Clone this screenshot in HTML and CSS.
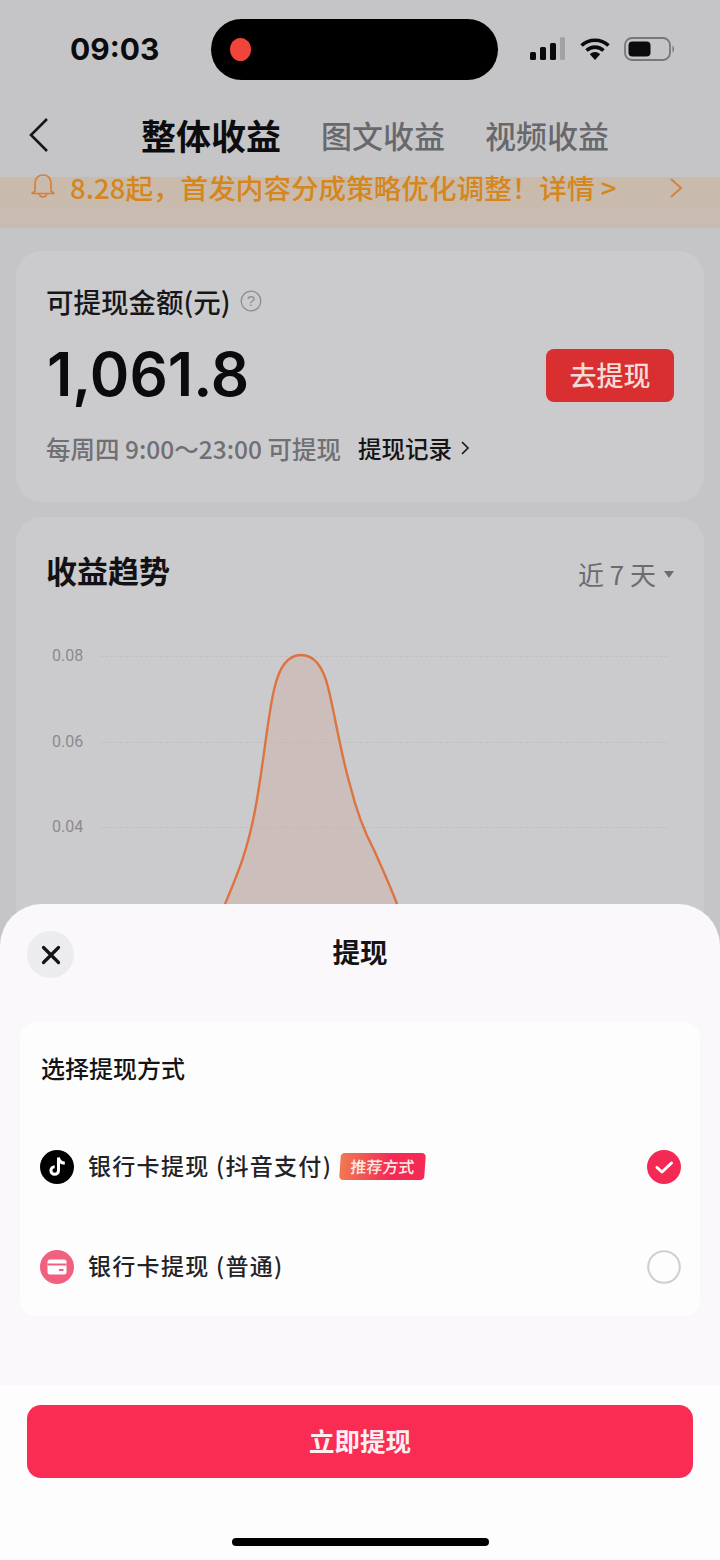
FILE: index.html
```html
<!DOCTYPE html>
<html lang="zh">
<head>
<meta charset="utf-8">
<title>整体收益</title>
<link rel="stylesheet" href="styles.css">
</head>
<body>
<div class="page">
  <div class="status">
    <span class="time">09:03</span>
    <div class="island"><span class="rec"></span></div>
    <div class="status-icons">
      <svg class="signal" width="36" height="24" viewBox="0 0 36 24"><rect x="0" y="15" width="6" height="8" rx="1.5" fill="#0a0a0c"/><rect x="10" y="10" width="6" height="13" rx="1.5" fill="#0a0a0c"/><rect x="20" y="6" width="6" height="17" rx="1.5" fill="#0a0a0c"/><rect x="30" y="0" width="5" height="23" rx="1.5" fill="#a2a2a6"/></svg>
      <svg class="wifi" width="32" height="24" viewBox="0 0 32 24"><path d="M2.500 8.500C10 1.500 22 1.500 29.500 8.500M7.500 13.500C12.500 9 19.500 9 24.500 13.500" fill="none" stroke="#0a0a0c" stroke-width="3.600"/><path d="M10.800 17.200C14 14.300 18 14.300 21.200 17.200L16 23Z" fill="#0a0a0c"/></svg>
      <svg class="battery" width="52" height="26" viewBox="0 0 52 26"><rect x="1" y="2" width="45" height="22" rx="7" fill="none" stroke="#77777b" stroke-width="1.800"/><rect x="4.500" y="5.500" width="22" height="15" rx="4" fill="#0a0a0c"/><path d="M48.500 9.500C50.500 10.500 50.500 15.500 48.500 16.500Z" fill="#77777b"/></svg>
    </div>
  </div>

  <div class="nav">
    <svg class="back" width="24" height="36" viewBox="0 0 24 36"><path d="M20 2L4 18L20 34" fill="none" stroke="#17171a" stroke-width="2.600"/></svg>
    <span class="tab tab-on">整体收益</span>
    <span class="tab">图文收益</span>
    <span class="tab">视频收益</span>
  </div>

  <div class="notice">
    <svg class="bell" width="24" height="26" viewBox="0 0 24 26"><path d="M4 18V10C4 5 7.500 2 12 2S20 5 20 10V18L23 20.500H1Z M8.500 20.500C8.500 25 15.500 25 15.500 20.500" fill="none" stroke="#d6803a" stroke-width="1.700" stroke-linejoin="round"/></svg>
    <span class="notice-text">8.28起，首发内容分成策略优化调整！详情 &gt;</span>
    <svg class="notice-arrow" width="14" height="22" viewBox="0 0 14 22"><path d="M2 2L12 11L2 20" fill="none" stroke="#d6803a" stroke-width="2"/></svg>
  </div>

  <section class="card balance">
    <div class="balance-title">
      <span>可提现金额(元)</span>
      <svg width="22" height="22" viewBox="0 0 22 22"><circle cx="11" cy="11" r="9.800" fill="none" stroke="#8d8d90" stroke-width="1.300"/><text x="11" y="16" text-anchor="middle" class="help-mark">?</text></svg>
    </div>
    <div class="balance-row">
      <span class="amount">1,061.8</span>
      <span class="go-btn">去提现</span>
    </div>
    <div class="balance-note">
      <span class="note-grey">每周四 9:00～23:00 可提现</span>
      <span class="note-link">提现记录</span>
      <svg width="10" height="16" viewBox="0 0 10 16"><path d="M2 2L8 8L2 14" fill="none" stroke="#17171a" stroke-width="1.600"/></svg>
    </div>
  </section>

  <section class="card trend">
    <div class="trend-head">
      <span class="trend-title">收益趋势</span>
      <span class="range">近 7 天<i class="caret"></i></span>
    </div>
    <div class="chart">
      <div class="chart-row"><span>0.08</span><i></i></div>
      <div class="chart-row"><span>0.06</span><i></i></div>
      <div class="chart-row"><span>0.04</span><i></i></div>
      <svg class="curve" width="688" height="300" viewBox="0 0 688 300">
        <path d="M209 259C222 228 232 205 240 160C248 115 252 70 258 45C263 22 272 10 285 10C298 10 307 22 312 42C319 70 324 105 334 140C341 168 350 190 358 205C367 225 375 243 381 259Z" fill="#d0a78c" fill-opacity=".28"/>
        <path d="M209 259C222 228 232 205 240 160C248 115 252 70 258 45C263 22 272 10 285 10C298 10 307 22 312 42C319 70 324 105 334 140C341 168 350 190 358 205C367 225 375 243 381 259" fill="none" stroke="#dd7440" stroke-width="2.400"/>
      </svg>
    </div>
  </section>

  <div class="sheet">
    <div class="sheet-head">
      <span class="close">
        <svg width="20" height="20" viewBox="0 0 20 20"><path d="M2.500 2.500L17.500 17.500M17.500 2.500L2.500 17.500" stroke="#141416" stroke-width="3.200" stroke-linecap="round"/></svg>
      </span>
      <span class="sheet-title">提现</span>
    </div>
    <div class="methods">
      <div class="methods-title">选择提现方式</div>
      <div class="method first">
        <svg class="method-icon" width="34" height="34" viewBox="0 0 34 34"><circle cx="17" cy="17" r="17" fill="#000"/><path d="M18.500 7.500V20.500A3.800 3.800 0 1 1 14.700 16.700M18.500 7.500C18.800 10.800 21.300 13 24.800 13.200" fill="none" stroke="#fff" stroke-width="3"/></svg>
        <span class="method-name">银行卡提现 (抖音支付)</span>
        <span class="tag">推荐方式</span>
        <svg class="radio" width="34" height="34" viewBox="0 0 34 34"><circle cx="17" cy="17" r="17" fill="#f42a55"/><path d="M10 17.500L15 22L24.500 13" fill="none" stroke="#fff" stroke-width="3" stroke-linecap="round" stroke-linejoin="round"/></svg>
      </div>
      <div class="method">
        <svg class="method-icon" width="34" height="34" viewBox="0 0 34 34"><circle cx="17" cy="17" r="17" fill="#f2607f"/><rect x="7.500" y="9.500" width="19" height="15" rx="2.500" fill="#fff"/><rect x="7.500" y="13.500" width="19" height="2" fill="#f2607f"/><rect x="19" y="19" width="4.500" height="2" fill="#f2607f"/></svg>
        <span class="method-name">银行卡提现 (普通)</span>
        <svg class="radio" width="34" height="34" viewBox="0 0 34 34"><circle cx="17" cy="17" r="15.800" fill="none" stroke="#cfcfd1" stroke-width="2"/></svg>
      </div>
    </div>
    <div class="sheet-foot">
      <div class="cta">立即提现</div>
      <div class="home-bar"></div>
    </div>
  </div>
</div>
</body>
</html>
```
FILE: styles.css
```css
* { box-sizing: border-box; }
html, body { margin: 0; padding: 0; }
body {
  width: 720px;
  height: 1560px;
  overflow: hidden;
  font-family: "Noto Sans CJK SC", "Noto Sans", sans-serif;
}
.page {
  position: relative;
  width: 720px;
  height: 1560px;
  overflow: hidden;
  background: #c5c5c8;
  color: #121214;
}

/* status bar */
.status {
  height: 100px;
  padding-top: 19px;
  display: flex;
  align-items: flex-start;
}
.time {
  width: 211px;
  padding-left: 70px;
  height: 61px;
  font: 700 30px/60px Inter, "Liberation Sans", sans-serif;
  color: #0c0c0e;
}
.island {
  width: 287px;
  height: 61px;
  border-radius: 31px;
  background: #000;
  display: flex;
  align-items: center;
  padding-left: 19px;
}
.rec {
  width: 21px;
  height: 23px;
  border-radius: 50%;
  background: #f1453c;
}
.status-icons {
  flex: 1;
  height: 60px;
  padding-left: 32px;
  display: flex;
  align-items: center;
  gap: 14px;
}
.wifi { margin-left: -1px; }
.battery { margin-left: -1px; }

/* nav */
.nav {
  height: 77px;
  display: flex;
  align-items: center;
  padding: 0 0 2px 27px;
}
.back { margin-top: -6px; margin-right: 90px; }
.tab {
  font-size: 31px;
  font-weight: 500;
  line-height: 44px;
  margin-top: -6px;
  color: #68686c;
  margin-right: 40px;
}
.tab-on {
  font-size: 35px;
  font-weight: 700;
  color: #0d0d0f;
}

/* notice */
.notice {
  height: 51px;
  background: linear-gradient(#c9baaa, #c8bcb2);
  display: flex;
  align-items: flex-start;
  padding: 0 37px 0 31px;
}
.bell { margin-top: -4px; margin-right: 15px; }
.notice-text {
  flex: 1;
  margin-top: -8px;
  font-size: 27.600px;
  font-weight: 500;
  line-height: 36px;
  white-space: nowrap;
  color: #d5861c;
}

/* cards */
.card {
  margin: 0 16px;
  background: #cbcacd;
  border-radius: 26px;
}
.balance {
  margin-top: 23px;
  height: 251px;
  padding: 30px 30px 0 30px;
}
.balance-title {
  display: flex;
  align-items: center;
  gap: 9px;
  height: 40px;
  font-size: 27.500px;
  font-weight: 500;
  color: #17171a;
}
.help-mark {
  font: 400 15px "Liberation Sans", sans-serif;
  fill: #8d8d90;
}
.balance-row {
  margin-top: 17px;
  height: 72px;
  display: flex;
  align-items: center;
  justify-content: space-between;
}
.amount {
  font: 600 60px/72px Inter, "Liberation Sans", sans-serif;
  padding-left: 1px;
  color: #0b0b0d;
}
.go-btn {
  width: 128px;
  height: 53px;
  margin-top: 2px;
  border-radius: 8px;
  background: #d92f30;
  color: #f1dcd8;
  font-size: 27px;
  font-weight: 500;
  line-height: 51px;
  text-align: center;
}
.balance-note {
  margin-top: 21px;
  display: flex;
  align-items: center;
  height: 34px;
  font-size: 23.500px;
  font-weight: 500;
  white-space: nowrap;
}
.note-grey { font-size: 24.500px; color: #707074; margin-right: 17px; }
.note-link { color: #141416; margin-right: 8px; }
.trend {
  margin-top: 15px;
  height: 640px;
  padding-top: 30px;
}
.trend-head {
  display: flex;
  align-items: center;
  justify-content: space-between;
  padding: 0 30px;
  height: 44px;
}
.trend-title {
  font-size: 31px;
  font-weight: 700;
  color: #121214;
}
.range {
  display: flex;
  align-items: center;
  font-size: 26px;
  color: #6c6c70;
  margin-top: 8px;
}
.caret {
  margin-left: 8px;
  margin-top: 2px;
  border: 5px solid transparent;
  border-top: 7px solid #6c6c70;
  border-bottom: 0;
}
.chart {
  position: relative;
  margin-top: 54px;
}
.chart-row {
  height: 85.500px;
  display: flex;
  align-items: flex-start;
  padding-left: 36px;
  font: 400 16px/22px Roboto, "Liberation Sans", sans-serif;
  color: #8b8b8f;
}
.chart-row span { width: 48px; }
.chart-row i {
  width: 568px;
  margin-top: 11px;
  border-top: 1px dashed #c0c0c3;
}
.curve {
  position: absolute;
  left: 0;
  top: 0;
}

/* sheet */
.sheet {
  position: absolute;
  left: 0;
  right: 0;
  top: 904px;
  bottom: 0;
  background: #faf8fa;
  border-radius: 42px 42px 0 0;
  display: flex;
  flex-direction: column;
}
.sheet-head {
  position: relative;
  height: 118px;
  display: flex;
  justify-content: center;
  padding-top: 25px;
}
.close {
  position: absolute;
  left: 27px;
  top: 27px;
  width: 47px;
  height: 47px;
  border-radius: 50%;
  background: #ecebee;
  display: flex;
  align-items: center;
  justify-content: center;
}
.sheet-title {
  font-size: 27.500px;
  font-weight: 700;
  line-height: 44px;
  color: #141416;
}
.methods {
  margin: 0 20px;
  height: 294px;
  background: #fefdfe;
  border-radius: 16px;
  padding: 26px 20px 0 21px;
}
.methods-title {
  font-size: 24px;
  font-weight: 500;
  line-height: 40px;
  color: #141416;
}
.method {
  height: 100px;
  margin-right: -1px;
  margin-left: -1px;
  display: flex;
  align-items: center;
}
.method.first { margin-top: 29px; }
.method-icon { flex: none; margin-right: 14px; }
.method-name {
  font-size: 23px;
  font-weight: 500;
  line-height: 30px;
  margin-top: -4px;
  letter-spacing: 1.300px;
  color: #232326;
  white-space: nowrap;
}
.tag {
  margin-left: 8px;
  margin-top: -1px;
  width: 85px;
  height: 27px;
  border-radius: 4px;
  background: linear-gradient(90deg, #f07a50, #f42a55 60%);
  color: #fbeae6;
  font-size: 16px;
  font-weight: 500;
  line-height: 26px;
  text-align: center;
  transform: skewX(-4deg);
}
.radio { margin-left: auto; }
.sheet-foot {
  margin-top: auto;
  height: 175px;
  background: #fefdfe;
  padding: 20px 27px 0;
  display: flex;
  flex-direction: column;
  align-items: center;
}
.cta {
  width: 100%;
  height: 73px;
  border-radius: 14px;
  background: #fb2c53;
  color: #fdf0f1;
  font-size: 25.500px;
  font-weight: 700;
  line-height: 69px;
  text-align: center;
}
.home-bar {
  margin-top: 60px;
  width: 257px;
  height: 8px;
  border-radius: 4px;
  background: #000;
}
```
